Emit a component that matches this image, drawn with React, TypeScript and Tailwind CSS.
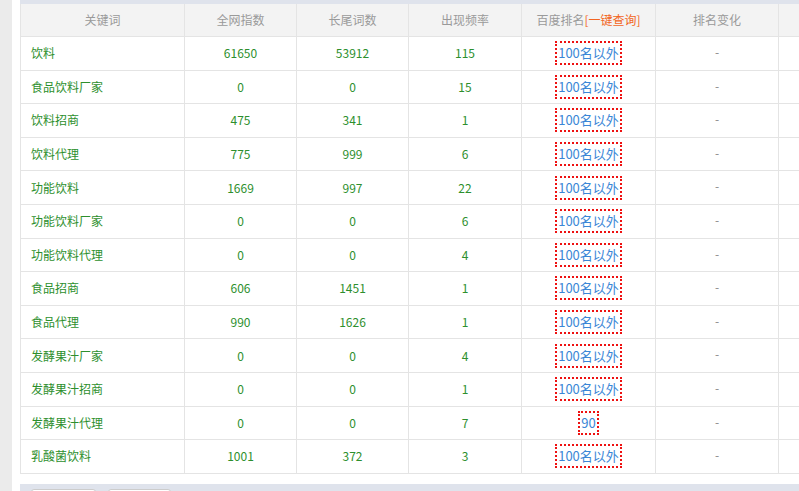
const rows: [string, string, string, string, string][] = [
  ["饮料", "61650", "53912", "115", "100名以外"],
  ["食品饮料厂家", "0", "0", "15", "100名以外"],
  ["饮料招商", "475", "341", "1", "100名以外"],
  ["饮料代理", "775", "999", "6", "100名以外"],
  ["功能饮料", "1669", "997", "22", "100名以外"],
  ["功能饮料厂家", "0", "0", "6", "100名以外"],
  ["功能饮料代理", "0", "0", "4", "100名以外"],
  ["食品招商", "606", "1451", "1", "100名以外"],
  ["食品代理", "990", "1626", "1", "100名以外"],
  ["发酵果汁厂家", "0", "0", "4", "100名以外"],
  ["发酵果汁招商", "0", "0", "1", "100名以外"],
  ["发酵果汁代理", "0", "0", "7", "90"],
  ["乳酸菌饮料", "1001", "372", "3", "100名以外"],
];
const cols = "grid grid-cols-[164px_112px_112px_113px_134px_123px_40px]";
export default function App() {
  return (
    <div className="w-[799px] h-[491px] overflow-hidden bg-white flex text-[12px]" style={{ fontFamily: '"Noto Sans CJK SC", "Noto Sans", sans-serif' }}>
      <div className="w-[12px] bg-[#ebebeb] shrink-0" />
      <div className="w-[8px] shrink-0" />
      <div className="flex-1 flex flex-col">
        <div className="h-[4px] bg-[#dfe3ec] shrink-0" />
        <div className={`${cols} h-[33px] bg-[#f3f3f3] text-[#9a9a9a] border-l border-b border-[#e4e4e4] shrink-0`}>
          {["关键词", "全网指数", "长尾词数", "出现频率"].map((h) => (
            <div key={h} className="flex items-center justify-center border-r border-[#e4e4e4]">{h}</div>
          ))}
          <div className="flex items-center justify-center border-r border-[#e4e4e4]">百度排名<span className="text-[#f26522]">[一键查询]</span></div>
          <div className="flex items-center justify-center border-r border-[#e4e4e4]">排名变化</div>
          <div />
        </div>
        {rows.map((r, i) => (
          <div key={i} className={`${cols} h-[33.6px] border-l border-b border-[#e4e4e4] text-[#2d8f2d] shrink-0`}>
            <div className="flex items-center pl-[10px] border-r border-[#e4e4e4]">{r[0]}</div>
            <div className="flex items-center justify-center border-r border-[#e4e4e4]">{r[1]}</div>
            <div className="flex items-center justify-center border-r border-[#e4e4e4]">{r[2]}</div>
            <div className="flex items-center justify-center border-r border-[#e4e4e4]">{r[3]}</div>
            <div className="flex items-center justify-center border-r border-[#e4e4e4]">
              <span className="border-2 border-dotted border-[#ee1111] px-[1px] leading-[20px] text-[#3a86d6] text-[13px]">{r[4]}</span>
            </div>
            <div className="flex items-start justify-center pt-[6px] border-r border-[#e4e4e4] text-[#888]">-</div>
            <div />
          </div>
        ))}
        <div className="h-[10px] shrink-0" />
        <div className="flex-1 bg-[#dfe3ec] flex gap-[12px] pl-[11px] pt-[5px]">
          <div className="w-[65px] h-[20px] bg-white rounded-[3px] border border-[#ccc]" />
          <div className="w-[63px] h-[20px] bg-white rounded-[3px] border border-[#ccc]" />
        </div>
      </div>
    </div>
  );
}
